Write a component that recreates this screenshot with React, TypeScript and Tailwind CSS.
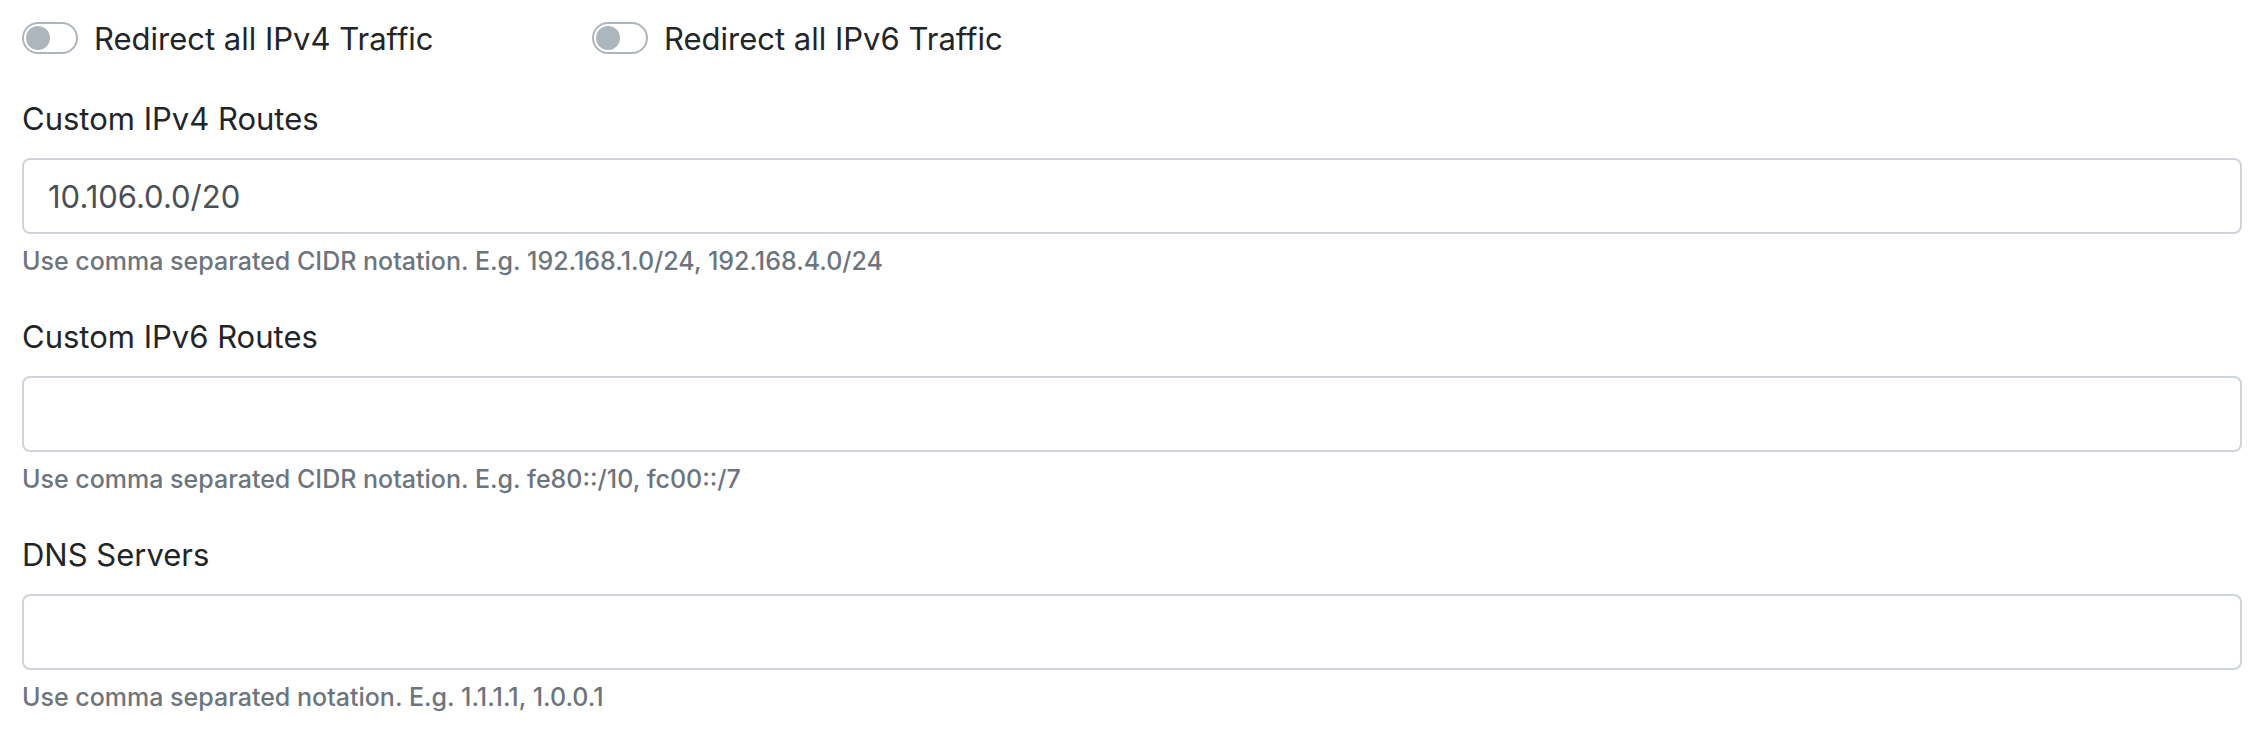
type ToggleProps = { id: string; label: string };

function Toggle({ id, label }: ToggleProps) {
  return (
    <div className="flex items-center gap-4">
      <input
        id={id}
        type="checkbox"
        role="switch"
        className="flex h-8 w-14 shrink-0 appearance-none items-center rounded-full border-2 border-[#adb5bd] bg-white px-0.5 before:block before:size-6 before:rounded-full before:bg-[#adb5bd] checked:justify-end checked:border-blue-600 checked:bg-blue-600 checked:before:bg-white"
      />
      <label htmlFor={id} className="pt-0.5 leading-[46px] whitespace-nowrap">
        {label}
      </label>
    </div>
  );
}

type FieldProps = { id: string; label: string; hint: string; value?: string };

function Field({ id, label, hint, value }: FieldProps) {
  return (
    <div className="flex flex-col">
      <label htmlFor={id} className="mb-3.5 self-start leading-[50px]">
        {label}
      </label>
      <input
        id={id}
        type="text"
        defaultValue={value}
        aria-describedby={`${id}-hint`}
        className="h-[76px] w-full rounded-lg border-2 border-[#ced4da] bg-white px-6 text-[#495057] outline-none focus:border-[#80bdff]"
      />
      <p id={`${id}-hint`} className="mt-2 text-[25px] leading-[38px] font-medium text-[#6c757d]">
        {hint}
      </p>
    </div>
  );
}

export default function App() {
  return (
    <form className="flex flex-col gap-8 bg-white pt-3.5 pr-6 pb-6 pl-[22px] font-['Inter',sans-serif] text-[31px] leading-[48px] text-[#212529]">
      <div className="grid grid-cols-4 gap-x-15">
        <Toggle id="redirect-ipv4" label="Redirect all IPv4 Traffic" />
        <Toggle id="redirect-ipv6" label="Redirect all IPv6 Traffic" />
      </div>
      <Field
        id="routes-ipv4"
        label="Custom IPv4 Routes"
        value="10.106.0.0/20"
        hint="Use comma separated CIDR notation. E.g. 192.168.1.0/24, 192.168.4.0/24"
      />
      <Field
        id="routes-ipv6"
        label="Custom IPv6 Routes"
        hint="Use comma separated CIDR notation. E.g. fe80::/10, fc00::/7"
      />
      <Field
        id="dns-servers"
        label="DNS Servers"
        hint="Use comma separated notation. E.g. 1.1.1.1, 1.0.0.1"
      />
    </form>
  );
}
